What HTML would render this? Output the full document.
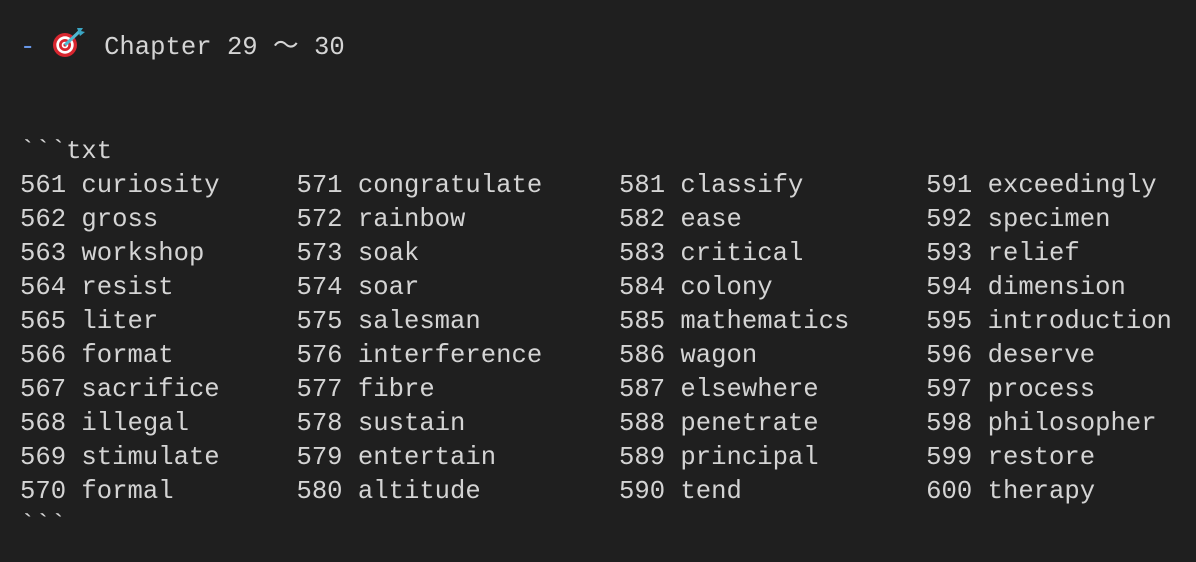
<!DOCTYPE html>
<html><head><meta charset="utf-8"><style>
html,body{margin:0;padding:0;background:#1f1f1f;width:1196px;height:562px;overflow:hidden}
pre{margin:0;position:absolute;left:20px;font-family:"Liberation Mono",monospace;font-size:25.6px;line-height:34px;color:#d4d4d4}
.b{color:#6796e6}
.e{display:inline-block;width:38px;height:30px;vertical-align:-5px;position:relative}
.e svg{position:absolute;left:0;top:-3px}
</style></head><body>
<pre style="top:29px"><span class="b">-</span> <span class="e"><svg width="35" height="32" viewBox="0 0 35 32"><circle cx="14" cy="19" r="12" fill="#d8262f"/><circle cx="14" cy="19" r="8.7" fill="#fff"/><circle cx="14" cy="19" r="6" fill="#d8262f"/><circle cx="14" cy="19" r="3.3" fill="#fff"/><circle cx="14" cy="19" r="1.6" fill="#d8262f"/><line x1="14" y1="19" x2="29" y2="5" stroke="#4fb8d0" stroke-width="3.2"/><path d="M26 2l6 0-2 3 4 1-5 4z" fill="#3aa6c4"/></svg></span> Chapter 29 ～ 30</pre>
<pre style="top:135px">&#96;&#96;&#96;txt
561 curiosity     571 congratulate     581 classify        591 exceedingly
562 gross         572 rainbow          582 ease            592 specimen
563 workshop      573 soak             583 critical        593 relief
564 resist        574 soar             584 colony          594 dimension
565 liter         575 salesman         585 mathematics     595 introduction
566 format        576 interference     586 wagon           596 deserve
567 sacrifice     577 fibre            587 elsewhere       597 process
568 illegal       578 sustain          588 penetrate       598 philosopher
569 stimulate     579 entertain        589 principal       599 restore
570 formal        580 altitude         590 tend            600 therapy
&#96;&#96;&#96;</pre>
</body></html>
